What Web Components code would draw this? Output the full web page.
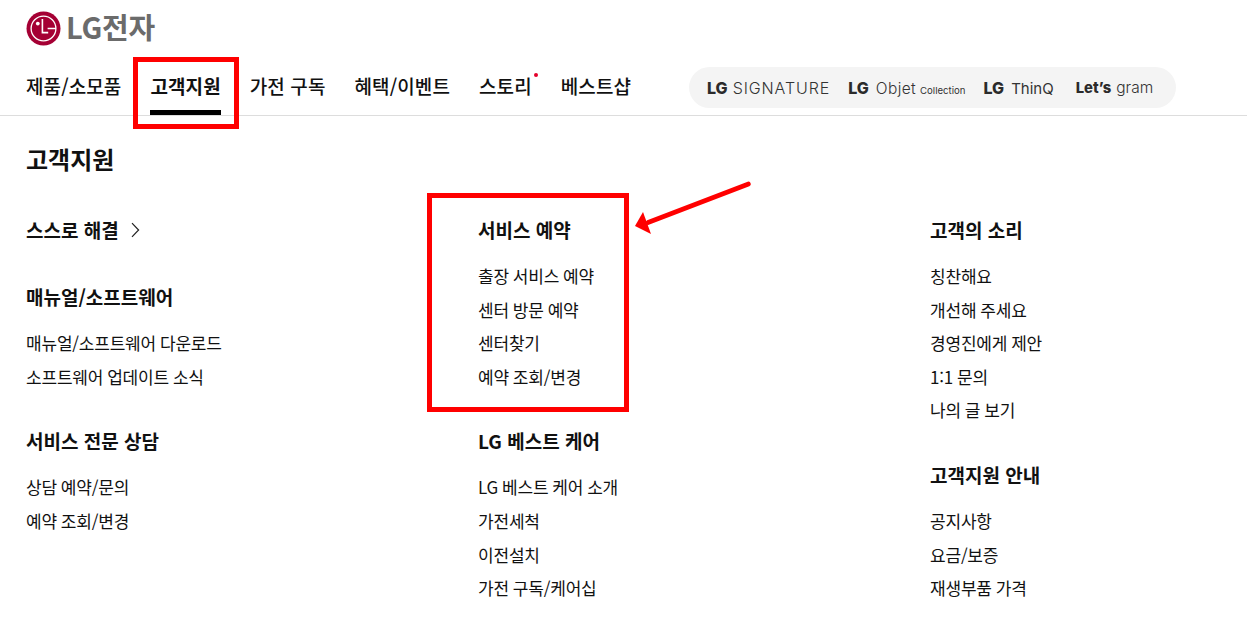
<!DOCTYPE html>
<html lang="ko">
<head>
<meta charset="utf-8">
<title>LG전자 고객지원</title>
<style>
  html, body { margin: 0; background: #fff; }
  body {
    position: relative;
    height: 618px;
    overflow: hidden;
    color: #111;
    font-family: "Noto Sans CJK KR", "Noto Sans", sans-serif;
  }
</style>
</head>
<body>
<lg-header>
  <nav-item>제품/소모품</nav-item>
  <nav-item active>고객지원</nav-item>
  <nav-item>가전 구독</nav-item>
  <nav-item>혜택/이벤트</nav-item>
  <nav-item dot>스토리</nav-item>
  <nav-item>베스트샵</nav-item>
</lg-header>

<support-menu heading="고객지원">
  <menu-column>
    <menu-group heading="스스로 해결" chevron></menu-group>
    <menu-group heading="매뉴얼/소프트웨어" style="--group-gap: 41px">
      <a>매뉴얼/소프트웨어 다운로드</a>
      <a>소프트웨어 업데이트 소식</a>
    </menu-group>
    <menu-group heading="서비스 전문 상담">
      <a>상담 예약/문의</a>
      <a>예약 조회/변경</a>
    </menu-group>
  </menu-column>
  <menu-column>
    <menu-group heading="서비스 예약">
      <a>출장 서비스 예약</a>
      <a>센터 방문 예약</a>
      <a>센터찾기</a>
      <a>예약 조회/변경</a>
    </menu-group>
    <menu-group heading="LG 베스트 케어">
      <a>LG 베스트 케어 소개</a>
      <a>가전세척</a>
      <a>이전설치</a>
      <a>가전 구독/케어십</a>
    </menu-group>
  </menu-column>
  <menu-column>
    <menu-group heading="고객의 소리">
      <a>칭찬해요</a>
      <a>개선해 주세요</a>
      <a>경영진에게 제안</a>
      <a>1:1 문의</a>
      <a>나의 글 보기</a>
    </menu-group>
    <menu-group heading="고객지원 안내">
      <a>공지사항</a>
      <a>요금/보증</a>
      <a>재생부품 가격</a>
    </menu-group>
  </menu-column>
</support-menu>

<mark-box style="left:133px;top:57px;width:106px;height:72px"></mark-box>
<mark-box style="left:427px;top:193px;width:202px;height:219px"></mark-box>
<mark-arrow></mark-arrow>

<script>
const FONT = `"Noto Sans CJK KR", "Noto Sans", sans-serif`;

class LgHeader extends HTMLElement {
  constructor() {
    super();
    this.attachShadow({ mode: "open" });
    this.shadowRoot.innerHTML = `
      <style>
        :host { display: block; height: 116px; box-sizing: border-box; border-bottom: 1px solid #ddd; padding: 11px 0 0 26px; font-family: ${FONT}; }
        .logo { display: flex; align-items: center; gap: 5px; height: 34px; }
        .logo svg { display: block; width: 35px; height: 35px; }
        .word { font: 700 29px/30px "Noto Sans CJK KR", sans-serif; color: #6b6b6b; letter-spacing: -0.2px; padding-bottom: 4px; }
        .row { display: flex; height: 70px; }
        nav { display: flex; gap: 29px; width: 663px; }
      </style>
      <div class="logo">
        <svg viewBox="0 0 35 35" aria-hidden="true">
          <circle cx="17.5" cy="17.5" r="17" fill="#a50034"/>
          <circle cx="17.5" cy="17.5" r="12.4" fill="none" stroke="#fff" stroke-width="1.3"/>
          <circle cx="11.8" cy="12.6" r="1.9" fill="#fff"/>
          <path d="M16.4 8v13.6h5.8" fill="none" stroke="#fff" stroke-width="1.6"/>
          <path d="M21.6 17.5h8.4" fill="none" stroke="#fff" stroke-width="1.5"/>
        </svg>
        <span class="word">LG전자</span>
      </div>
      <div class="row">
        <nav><slot></slot></nav>
        <brand-pill></brand-pill>
      </div>`;
  }
}

class NavItem extends HTMLElement {
  constructor() {
    super();
    this.attachShadow({ mode: "open" });
    this.shadowRoot.innerHTML = `
      <style>
        :host { display: block; position: relative; height: 70px; font-size: 19px; font-weight: 500; letter-spacing: 0.1px; color: #111; }
        .txt { display: block; line-height: 26px; padding-top: 28px; white-space: nowrap; }
        :host([active]) { font-weight: 700; }
        :host([active]) .bar { position: absolute; left: 0; right: 0; bottom: 0; height: 5px; background: #000; }
        :host([dot]) .dot { position: absolute; right: -6px; top: 28px; width: 4px; height: 4px; border-radius: 50%; background: #e4002b; }
      </style>
      <span class="txt"><slot></slot></span><i class="bar"></i><i class="dot"></i>`;
  }
}

class BrandPill extends HTMLElement {
  constructor() {
    super();
    this.attachShadow({ mode: "open" });
    this.shadowRoot.innerHTML = `
      <style>
        :host { display: flex; align-items: center; gap: 18px; box-sizing: border-box; width: 487px; height: 41px; margin-top: 22px; padding: 0 0 0 18px; border-radius: 21px; background: #f4f4f4; color: #333; font-family: "Inter", "Liberation Sans", sans-serif; white-space: nowrap; }
        span.brand { display: flex; align-items: baseline; }
        b { font-weight: 800; font-size: 16px; color: #2b2b2b; margin-right: 7px; }
        .thin { font-weight: 300; font-size: 15.5px; }
        .wide { font-size: 16px; letter-spacing: 0.9px; }
        small { font-size: 9.6px; font-weight: 400; margin-left: 4px; }
        .lets { font-size: 14.8px; margin-right: 5px; }
      </style>
      <span class="brand"><b style="margin-right:5px">LG</b><span class="thin wide">SIGNATURE</span></span>
      <span class="brand"><b>LG</b><span class="thin" style="letter-spacing:.4px">Objet</span><small>Collection</small></span>
      <span class="brand"><b>LG</b><span class="thin" style="font-weight:400;font-size:15px">ThinQ</span></span>
      <span class="brand" style="margin-left:4px"><b class="lets">Let’s</b><span class="thin" style="font-size:15.5px">gram</span></span>`;
  }
}

class SupportMenu extends HTMLElement {
  constructor() {
    super();
    this.attachShadow({ mode: "open" });
    this.shadowRoot.innerHTML = `
      <style>
        :host { display: block; padding: 26px 0 0 26px; font-family: ${FONT}; }
        h1 { margin: 0; font-size: 24px; line-height: 34px; font-weight: 700; color: #111; }
        .cols { display: grid; grid-template-columns: 452px 452px minmax(0, 1fr); margin-top: 41px; }
      </style>
      <h1></h1>
      <div class="cols"><slot></slot></div>`;
    this.shadowRoot.querySelector("h1").textContent = this.getAttribute("heading");
  }
}

class MenuColumn extends HTMLElement {
  constructor() {
    super();
    this.attachShadow({ mode: "open" });
    this.shadowRoot.innerHTML = `
      <style>:host { display: flex; flex-direction: column; gap: 0; }</style>
      <slot></slot>`;
  }
}

class MenuGroup extends HTMLElement {
  constructor() {
    super();
    this.attachShadow({ mode: "open" });
    this.shadowRoot.innerHTML = `
      <style>
        :host { display: block; }
        :host(:not(:first-child)) { margin-top: var(--group-gap, 35px); }
        h2 { display: flex; align-items: center; gap: 12px; margin: 0; font-size: 19px; line-height: 26px; font-weight: 700; color: #111; }
        svg { display: none; width: 9px; height: 16px; }
        :host([chevron]) svg { display: block; }
        .links { display: flex; flex-direction: column; margin-top: 16px; font-size: 17px; letter-spacing: -0.2px; word-spacing: -0.6px; line-height: 33.6px; color: #111; }
        :host([chevron]) .links { display: none; }
        ::slotted(a) { display: block; white-space: nowrap; }
      </style>
      <h2><span></span>
        <svg viewBox="0 0 9 16" aria-hidden="true"><path d="M1 1.2 7.6 8 1 14.8" fill="none" stroke="#222" stroke-width="1.2"/></svg>
      </h2>
      <div class="links"><slot></slot></div>`;
    this.shadowRoot.querySelector("h2 span").textContent = this.getAttribute("heading");
  }
}

// red annotations lying over the page
class MarkBox extends HTMLElement {
  constructor() {
    super();
    this.attachShadow({ mode: "open" });
    this.shadowRoot.innerHTML = `
      <style>:host { position: absolute; box-sizing: border-box; border: 5px solid #f00; pointer-events: none; }</style>`;
  }
}

class MarkArrow extends HTMLElement {
  constructor() {
    super();
    this.attachShadow({ mode: "open" });
    this.shadowRoot.innerHTML = `
      <style>:host { position: absolute; left: 630px; top: 178px; width: 125px; height: 62px; } svg { display: block; }</style>
      <svg width="125" height="62" viewBox="630 178 125 62" aria-hidden="true">
        <path d="M748.5 184 648 222.5" fill="none" stroke="#f00" stroke-width="4.6" stroke-linecap="round"/>
        <path d="M635 226 643 212 651 234Z" fill="#f00"/>
      </svg>`;
  }
}

customElements.define("lg-header", LgHeader);
customElements.define("nav-item", NavItem);
customElements.define("brand-pill", BrandPill);
customElements.define("support-menu", SupportMenu);
customElements.define("menu-column", MenuColumn);
customElements.define("menu-group", MenuGroup);
customElements.define("mark-box", MarkBox);
customElements.define("mark-arrow", MarkArrow);
</script>
</body>
</html>
